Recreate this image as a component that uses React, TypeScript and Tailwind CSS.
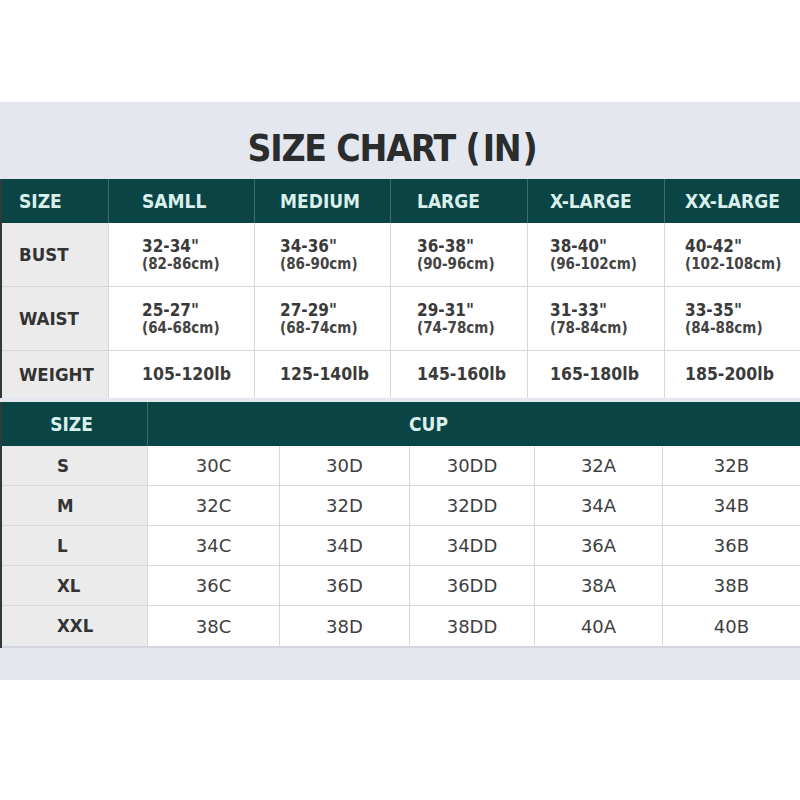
const font = { fontFamily: '"DejaVu Sans Condensed", "DejaVu Sans", sans-serif' };

const sizeCols = ["SAMLL", "MEDIUM", "LARGE", "X-LARGE", "XX-LARGE"];
const colW = ["w-[107px]", "w-[146px]", "w-[136px]", "w-[137px]", "w-[137px]", "flex-1"];
const colPad = ["pl-[17px]", "pl-[33px]", "pl-[25px]", "pl-[26px]", "pl-[22px]", "pl-[20px]"];

const bust = [
  ['32-34"', "(82-86cm)"],
  ['34-36"', "(86-90cm)"],
  ['36-38"', "(90-96cm)"],
  ['38-40"', "(96-102cm)"],
  ['40-42"', "(102-108cm)"],
];
const waist = [
  ['25-27"', "(64-68cm)"],
  ['27-29"', "(68-74cm)"],
  ['29-31"', "(74-78cm)"],
  ['31-33"', "(78-84cm)"],
  ['33-35"', "(84-88cm)"],
];
const weight = ["105-120lb", "125-140lb", "145-160lb", "165-180lb", "185-200lb"];

const cups = [
  ["S", ["30C", "30D", "30DD", "32A", "32B"]],
  ["M", ["32C", "32D", "32DD", "34A", "34B"]],
  ["L", ["34C", "34D", "34DD", "36A", "36B"]],
  ["XL", ["36C", "36D", "36DD", "38A", "38B"]],
  ["XXL", ["38C", "38D", "38DD", "40A", "40B"]],
] as const;
const cupW = ["w-[146px]", "w-[132px]", "w-[130px]", "w-[125px]", "w-[128px]", "flex-1"];

function TwoLine({ rows, label }: { rows: string[][]; label: string }) {
  return (
    <div className="flex h-[64px] border-b border-[#d6d8dc]">
      <div className={`${colW[0]} ${colPad[0]} flex items-center bg-[#ebebec] border-r border-[#d6d8dc] text-[18.5px] font-bold text-[#333]`}>
        {label}
      </div>
      {rows.map((r, i) => (
        <div
          key={i}
          className={`${colW[i + 1]} ${colPad[i + 1]} flex flex-col justify-center bg-white ${i < 4 ? "border-r border-[#d6d8dc]" : ""} text-[#3a3a3a]`}
        >
          <span className="text-[17px] font-bold leading-[19px]">{r[0]}</span>
          <span className="text-[15px] font-bold leading-[17px] text-[#444]">{r[1]}</span>
        </div>
      ))}
    </div>
  );
}

export default function App() {
  return (
    <div className="w-[800px] h-[800px] bg-white overflow-hidden" style={font}>
      <div className="mt-[102px] h-[578px] bg-[#e4e7ee]">
        <div className="flex h-[77px] items-end justify-center pb-[12px] pr-[16px]">
          <h1 className="text-[37px] font-bold leading-none tracking-[-1.2px] text-[#2a2c2e]">
            SIZE CHART <span className="tracking-[2px]">(</span>IN<span className="pl-[2px]">)</span>
          </h1>
        </div>

        <div className="border-l-2 border-[#2f3b3b]">
          <div className="flex h-[44px] bg-[#0a4444] text-[19px] font-bold text-[#d9efec]">
            {["SIZE", ...sizeCols].map((h, i) => (
              <div key={h} className={`${colW[i]} ${colPad[i]} flex items-center ${i < 5 ? "border-r border-[#3d6b6a]" : ""}`}>
                {h}
              </div>
            ))}
          </div>
          <TwoLine rows={bust} label="BUST" />
          <TwoLine rows={waist} label="WAIST" />
          <div className="flex h-[47px]">
            <div className={`${colW[0]} ${colPad[0]} flex items-center bg-[#ebebec] border-r border-[#d6d8dc] text-[18.5px] font-bold text-[#333]`}>
              WEIGHT
            </div>
            {weight.map((w, i) => (
              <div
                key={w}
                className={`${colW[i + 1]} ${colPad[i + 1]} flex items-center bg-white ${i < 4 ? "border-r border-[#d6d8dc]" : ""} text-[17.5px] font-bold text-[#3a3a3a]`}
              >
                {w}
              </div>
            ))}
          </div>
        </div>

        <div className="mt-[4px] border-l-2 border-[#2f3b3b]">
          <div className="flex h-[44px] bg-[#0a4444] text-[19px] font-bold text-[#d9efec]">
            <div className={`${cupW[0]} flex items-center justify-center pr-[6px] border-r border-[#3d6b6a]`}>SIZE</div>
            <div className="flex flex-1 items-center pl-[261px]">CUP</div>
          </div>
          {cups.map(([s, vals], r) => (
            <div key={s} className={`flex h-[40px] ${r < 4 ? "border-b border-[#d6d8dc]" : ""}`}>
              <div className={`${cupW[0]} flex items-center pl-[55px] bg-[#ebebec] border-r border-[#d6d8dc] text-[18.5px] font-bold text-[#333]`}>
                {s}
              </div>
              {vals.map((v, i) => (
                <div
                  key={v}
                  className={`${cupW[i + 1]} flex items-center justify-center bg-white ${i < 4 ? "border-r border-[#d6d8dc]" : ""} text-[18px] text-[#3f3f3f]`}
                  style={{ fontFamily: '"DejaVu Sans", sans-serif' }}
                >
                  {v}
                </div>
              ))}
            </div>
          ))}
          <div className="h-[2px] bg-[#d3d6dc]" />
        </div>
      </div>
    </div>
  );
}
